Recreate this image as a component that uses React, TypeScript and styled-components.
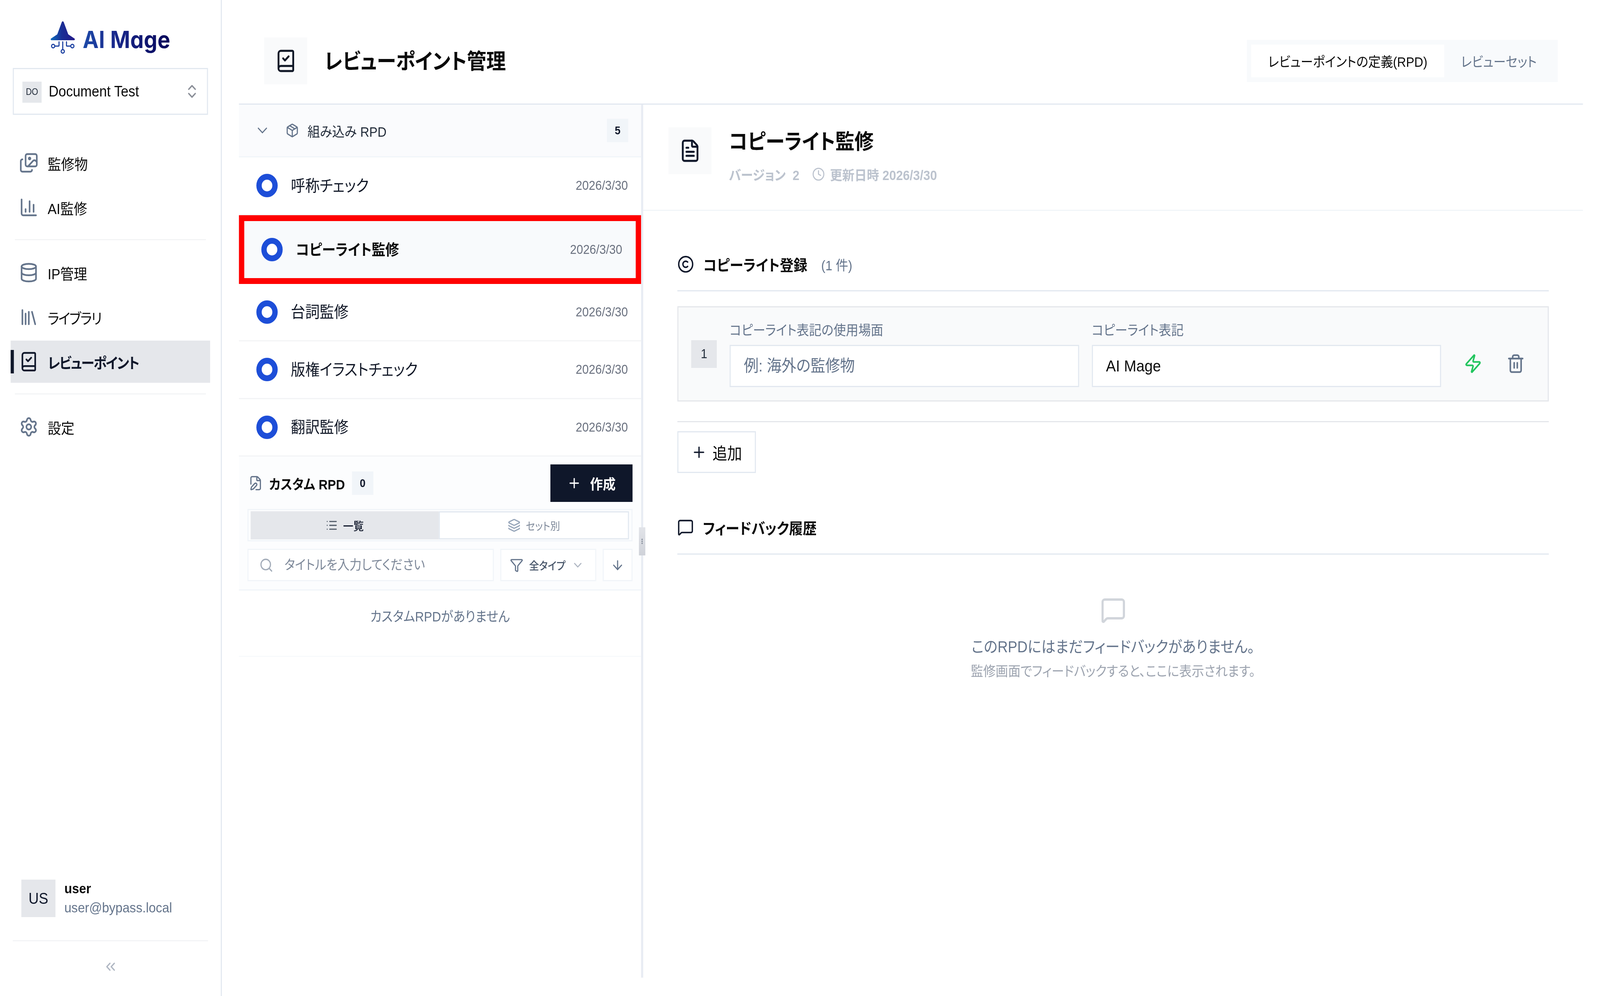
import React from 'react';
import styled, { createGlobalStyle } from 'styled-components';
import {
  ArrowDown,
  BookCheck,
  ChartColumn,
  ChevronDown,
  ChevronsLeft,
  ChevronsUpDown,
  Clock,
  Copyright,
  Database,
  FilePen,
  FileText,
  Filter,
  Images,
  Layers,
  Library,
  List,
  MessageSquare,
  Package,
  Plus,
  Search,
  Settings,
  Trash2,
  Zap,
} from 'lucide-react';

// the layout is drawn on a 4500 wide sheet; the browser window can be narrower
const DESIGN_WIDTH = 4500;
const fitX = Math.min(1, window.innerWidth / DESIGN_WIDTH);

const GlobalStyle = createGlobalStyle`
  html, body {
    margin: 0;
    padding: 0;
    height: 2550px;
    overflow: hidden;
    background: #ffffff;
  }
  body {
    font-family: "Liberation Sans", "Noto Sans CJK JP", sans-serif;
    font-feature-settings: "palt";
    color: #0f172a;
  }
  * {
    box-sizing: border-box;
  }
`;

const Shell = styled.div`
  display: flex;
  width: ${DESIGN_WIDTH}px;
  height: 2550px;
  transform-origin: 0 0;
`;

/* sidebar */

const Sidebar = styled.aside`
  display: flex;
  flex-direction: column;
  flex: 0 0 624px;
  border-right: 3px solid #e2e8f0;
`;

const LogoRow = styled.div`
  display: flex;
  justify-content: center;
  gap: 22px;
  height: 174px;
  padding-top: 54px;
`;

const LogoText = styled.span`
  height: 84px;
  padding-top: 13px;
  font-family: "Inter", sans-serif;
  font-feature-settings: "cv11";
  font-size: 60px;
  line-height: 68px;
  font-weight: 700;
  letter-spacing: 0.5px;
  background: linear-gradient(90deg, #1d4aa8 0%, #1a2a8e 35%, #07075a 100%);
  -webkit-background-clip: text;
  background-clip: text;
  color: transparent;
`;

const ProjectSelect = styled.div`
  display: flex;
  align-items: center;
  height: 120px;
  margin: 0 36px;
  padding: 0 20px 0 24px;
  border: 3px solid #e2e8f0;
`;

const ProjectBadge = styled.span`
  display: flex;
  align-items: center;
  justify-content: center;
  width: 54px;
  height: 54px;
  margin-top: 3px;
  background: #e5e7eb;
  font-size: 23px;
  color: #1f2937;
`;

const ProjectName = styled.span`
  flex: 1;
  margin-left: 20px;
  font-size: 38.2px;
  color: #0a0a0a;
`;

const Nav = styled.nav`
  display: flex;
  flex-direction: column;
  gap: 6px;
  margin: 69px 30px 0;
`;

const NavItem = styled.div<{ $active?: boolean; $kana?: boolean }>`
  position: relative;
  display: flex;
  align-items: center;
  gap: 26px;
  height: 108px;
  padding-left: 24px;
  font-size: 37.7px;
  letter-spacing: ${(p) => (p.$kana ? '-2.3px' : '0')};
  font-weight: ${(p) => (p.$active ? 700 : 400)};
  color: ${(p) => (p.$active ? '#0f172a' : '#0a0a0a')};
  background: ${(p) => (p.$active ? '#e5e7eb' : 'transparent')};

  ${(p) =>
    p.$active &&
    `&::before {
      content: '';
      position: absolute;
      left: 0;
      top: 24px;
      width: 9px;
      height: 60px;
      background: #0f172a;
    }`}
`;

const NavDivider = styled.div`
  height: 3px;
  margin: 21px 12px 23px;
  background: #f3f4f6;
`;

const UserRow = styled.div`
  display: flex;
  align-items: center;
  gap: 25px;
  margin-top: auto;
  padding: 0 0 59px 60px;
`;

const Avatar = styled.span`
  display: flex;
  align-items: center;
  justify-content: center;
  width: 96px;
  height: 96px;
  background: #e5e7eb;
  font-size: 40px;
  color: #0f172a;
`;

const UserText = styled.div`
  display: flex;
  flex-direction: column;
  gap: 6px;
`;

const UserName = styled.span`
  font-size: 35.5px;
  line-height: 42px;
  font-weight: 700;
  color: #0a0a0a;
`;

const UserMail = styled.span`
  font-size: 35.8px;
  line-height: 44px;
  color: #64748b;
`;

const SideFooter = styled.div`
  display: flex;
  align-items: center;
  justify-content: center;
  height: 132px;
  margin: 0 36px 11px;
  border-top: 3px solid #f3f4f6;
`;

/* main */

const Main = styled.main`
  display: flex;
  flex-direction: column;
  flex: 1;
  min-width: 0;
  padding: 0 48px;
`;

const PageHeader = styled.header`
  display: flex;
  align-items: center;
  height: 268px;
  padding: 46px 71px 0;
  border-bottom: 3px solid #e2e8f0;
`;

const IconBox = styled.span`
  display: flex;
  align-items: center;
  justify-content: center;
  flex: 0 0 121px;
  height: 120px;
  background: #f9fafb;
`;

const PageTitle = styled.h1`
  flex: 1;
  margin: 0 0 8px 48px;
  font-size: 55px;
  font-weight: 700;
  color: #0a0a0a;
`;

const HeaderTabs = styled.div`
  display: flex;
  align-items: center;
  height: 108px;
  padding: 0 12px;
  background: #f8fafc;
`;

const HeaderTab = styled.span<{ $active?: boolean }>`
  display: flex;
  align-items: center;
  justify-content: center;
  width: ${(p) => (p.$active ? '543px' : '307px')};
  height: 84px;
  font-size: 34.8px;
  color: ${(p) => (p.$active ? '#0a0a0a' : '#64748b')};
  background: ${(p) => (p.$active ? '#ffffff' : 'transparent')};
`;

const Body = styled.div`
  display: flex;
  height: 2235px;
`;

/* left list panel */

const ListPanel = styled.section`
  position: relative;
  flex: 0 0 1137px;
  border-right: 6px solid #e8ecf3;
`;

const Resizer = styled.span`
  position: absolute;
  top: 1082px;
  right: -12px;
  width: 18px;
  height: 72px;
  background:
    radial-gradient(circle, #7f8795 1.5px, transparent 2px) center / 6px 6px no-repeat,
    radial-gradient(circle, #7f8795 1.5px, transparent 2px) 50% 42% / 6px 6px no-repeat,
    radial-gradient(circle, #7f8795 1.5px, transparent 2px) 50% 58% / 6px 6px no-repeat,
    linear-gradient(180deg, #e2e4e9, #cfd2d9);
`;

const BuiltinHead = styled.div`
  display: flex;
  align-items: center;
  gap: 42px;
  height: 135px;
  padding: 0 36px 0 43px;
  background: #fafbfd;
  border-bottom: 3px solid #f1f5f9;
`;

const BuiltinTitle = styled.span`
  flex: 1;
  margin-left: -18px;
  font-size: 35px;
  color: #1f2937;
`;

const CountBadge = styled.span`
  display: flex;
  align-items: center;
  justify-content: center;
  width: 60px;
  height: 60px;
  background: #f1f5f9;
  font-size: 29px;
  font-weight: 700;
  color: #0f172a;
`;

const Row = styled.div<{ $selected?: boolean }>`
  display: flex;
  align-items: center;
  height: ${(p) => (p.$selected ? '176px' : '147.5px')};
  padding: ${(p) => (p.$selected ? '0 38px 0 48px' : '0 37px 0 49px')};
  background: ${(p) => (p.$selected ? '#f8fafc' : '#ffffff')};
  border: ${(p) => (p.$selected ? '15px solid #ff0000' : 'none')};
  border-bottom: ${(p) =>
    p.$selected ? '15px solid #ff0000' : '3px solid #f3f4f6'};
`;

const Ring = styled.span`
  flex: 0 0 60px;
  height: 60px;
  border: 15px solid #1d4ed8;
  border-radius: 50%;
  background: #ffffff;
`;

const RowTitle = styled.span<{ $selected?: boolean }>`
  flex: 1;
  margin-left: 37px;
  padding-bottom: 6px;
  font-size: ${(p) => (p.$selected ? '38.5px' : '40.5px')};
  font-weight: ${(p) => (p.$selected ? 700 : 400)};
  color: ${(p) => (p.$selected ? '#0a0a0a' : '#111827')};
`;

const RowDate = styled.span`
  font-size: 33px;
  color: #6b7280;
`;

const CustomBlock = styled.div`
  padding: 20px 24px 21px;
  background: #fcfdfe;
  border-bottom: 3px solid #f1f5f9;
`;

const CustomHead = styled.div`
  display: flex;
  align-items: center;
  height: 96px;
  padding-left: 3px;
`;

const CustomTitle = styled.span`
  margin: 0 20px 0 18px;
  font-size: 35px;
  font-weight: 700;
  color: #0a0a0a;
`;

const CreateButton = styled.button`
  display: flex;
  align-items: center;
  justify-content: center;
  gap: 24px;
  width: 231px;
  height: 96px;
  margin-left: auto;
  border: none;
  background: #0f172a;
  color: #ffffff;
  font: inherit;
  font-size: 36px;
  font-weight: 700;
`;

const ViewSwitch = styled.div`
  display: flex;
  height: 83px;
  margin-top: 18px;
  padding: 3px 7px 2px 6px;
  border: 3px solid #f1f5f9;
`;

const ViewTab = styled.span<{ $active?: boolean }>`
  display: flex;
  align-items: center;
  justify-content: center;
  gap: 15px;
  flex: 1;
  font-size: ${(p) => (p.$active ? '29px' : '27.4px')};
  font-weight: ${(p) => (p.$active ? 500 : 400)};
  color: ${(p) => (p.$active ? '#0f172a' : '#7c8798')};
  background: ${(p) => (p.$active ? '#e5e7eb' : '#ffffff')};
  border: ${(p) => (p.$active ? 'none' : '3px solid #e2e8f0')};
`;

const SearchRow = styled.div`
  display: flex;
  gap: 18px;
  height: 83px;
  margin-top: 19px;
`;

const SearchBox = styled.label`
  display: flex;
  align-items: center;
  gap: 29px;
  flex: 1;
  padding-left: 30px;
  border: 3px solid #f1f5f9;
  background: #ffffff;
`;

const SearchInput = styled.input`
  flex: 1;
  min-width: 0;
  border: none;
  outline: none;
  background: transparent;
  font: inherit;
  font-size: 34px;

  &::placeholder {
    color: #7c8798;
    opacity: 1;
  }
`;

const FilterButton = styled.div`
  display: flex;
  align-items: center;
  gap: 16px;
  flex: 0 0 270px;
  padding-left: 24px;
  border: 3px solid #f1f5f9;
  background: #ffffff;
  font-size: 28px;
  font-weight: 500;
  color: #475569;
`;

const SortButton = styled.div`
  display: flex;
  align-items: center;
  justify-content: center;
  flex: 0 0 84px;
  border: 3px solid #f1f5f9;
  background: #ffffff;
`;

const CustomEmpty = styled.div`
  display: flex;
  align-items: center;
  justify-content: center;
  height: 170px;
  padding-bottom: 40px;
  border-bottom: 3px solid #f8fafc;
  font-size: 34.7px;
  color: #64748b;
`;

/* detail panel */

const Detail = styled.section`
  flex: 1;
  min-width: 0;
`;

const DetailHead = styled.div`
  display: flex;
  align-items: flex-start;
  gap: 49px;
  height: 272px;
  padding: 58px 0 0 71px;
  border-bottom: 3px solid #f1f5f9;
`;

const DetailTitle = styled.h2`
  margin: 0;
  font-size: 54px;
  line-height: 74px;
  font-weight: 700;
  color: #0a0a0a;
`;

const MetaRow = styled.div`
  display: flex;
  align-items: center;
  height: 50px;
  margin-top: 21px;
  font-size: 34.5px;
  font-weight: 700;
  color: #bcc3ce;
`;

const MetaVersion = styled.span`
  margin-right: 36px;
`;

const MetaDate = styled.span`
  margin-left: 14px;
`;

const DetailBody = styled.div`
  padding: 0 96px;
`;

const SectionHead = styled.div`
  display: flex;
  align-items: center;
  box-sizing: content-box;
  height: 46px;
  padding-top: 113px;
  padding-bottom: 44px;
  gap: 26px;
  border-bottom: 3px solid #e2e8f0;
`;

const SectionTitle = styled.span`
  font-size: 38.8px;
  font-weight: 700;
  color: #0a0a0a;
`;

const SectionCount = styled.span`
  margin-left: 13px;
  font-size: 35px;
  color: #64748b;
`;

const Card = styled.div`
  display: flex;
  align-items: center;
  gap: 36px;
  height: 244px;
  margin-top: 38px;
  padding: 0 64px 0 36px;
  border: 3px solid #e5e7eb;
  background: #f9fafb;
`;

const IndexBadge = styled.span`
  display: flex;
  align-items: center;
  justify-content: center;
  flex: 0 0 72px;
  height: 71px;
  background: #e5e7eb;
  font-size: 33px;
  color: #1f2937;
`;

const Field = styled.div`
  flex: 1;
  min-width: 0;
`;

const FieldLabel = styled.div`
  height: 50px;
  margin-bottom: 12px;
  font-size: 35px;
  line-height: 50px;
  color: #64748b;
`;

const FieldInput = styled.input`
  display: block;
  width: 100%;
  height: 108px;
  padding: 0 37px;
  border: 3px solid #e2e8f0;
  outline: none;
  background: #ffffff;
  font: inherit;
  font-size: 41.5px;
  color: #0a0a0a;

  &::placeholder {
    color: #64748b;
    opacity: 1;
  }
`;

const CardActions = styled.div`
  display: flex;
  gap: 68px;
  margin: 50px 0 0 28px;
`;

const Rule = styled.div`
  height: 3px;
  margin-top: 50px;
  background: #e5e7eb;
`;

const AddButton = styled.button`
  display: flex;
  align-items: center;
  justify-content: center;
  gap: 16px;
  width: 221px;
  height: 107px;
  margin-top: 23px;
  border: 3px solid #e2e8f0;
  background: #ffffff;
  font: inherit;
  font-size: 41.5px;
  color: #0a0a0a;
`;

const FeedbackHead = styled(SectionHead)`
  padding-top: 116px;
`;

const EmptyFeedback = styled.div`
  display: flex;
  flex-direction: column;
  align-items: center;
  padding-top: 106px;
`;

const EmptyTitle = styled.p`
  margin: 28px 0 0;
  font-size: 40px;
  line-height: 60px;
  color: #64748b;
`;

const EmptyHint = styled.p`
  margin: 8px 0 0;
  font-size: 35px;
  line-height: 50px;
  color: #9ca3af;
`;

const LogoMark = () => (
  <svg width="69" height="84" viewBox="0 0 69 84" fill="none">
    <defs>
      <linearGradient id="logoFill" x1="0" y1="0" x2="1" y2="0">
        <stop offset="0" stopColor="#0f6cbd" />
        <stop offset="0.45" stopColor="#1a2f96" />
        <stop offset="1" stopColor="#241a8a" />
      </linearGradient>
    </defs>
    <path
      d="M32 2 Q34.500 -1 37 2 L50 34 L68 45 Q69.500 49 66 49 L3 49 Q-.5 49 1 45 L19 34 Z"
      fill="url(#logoFill)"
    />
    <g stroke="#1a3fa0" strokeWidth="3" strokeLinecap="round">
      <path d="M34.500 53V72" />
      <path d="M24 53V62.500a1.500 1.500 0 0 1-1.500 1.500H13" />
      <path d="M45 53V62.500a1.500 1.500 0 0 0 1.500 1.500H56" />
      <circle cx="7.500" cy="64" r="4.500" />
      <circle cx="61.500" cy="64" r="4.500" />
      <circle cx="34.500" cy="77.500" r="4.500" />
    </g>
  </svg>
);

const rows = [
  { title: '呼称チェック' },
  { title: 'コピーライト監修', selected: true },
  { title: '台詞監修' },
  { title: '版権イラストチェック' },
  { title: '翻訳監修' },
];

export default function App() {
  return (
    <Shell style={{ transform: `scaleX(${fitX})` }}>
      <GlobalStyle />
      <Sidebar>
        <LogoRow>
          <LogoMark />
          <LogoText>AI Mage</LogoText>
        </LogoRow>
        <ProjectSelect>
          <ProjectBadge>DO</ProjectBadge>
          <ProjectName>Document Test</ProjectName>
          <ChevronsUpDown size={44} color="#8b8f98" strokeWidth={2} />
        </ProjectSelect>
        <Nav>
          <NavItem>
            <Images size={54} color="#64748b" />
            監修物
          </NavItem>
          <NavItem>
            <ChartColumn size={54} color="#64748b" />
            AI監修
          </NavItem>
          <NavDivider />
          <NavItem>
            <Database size={54} color="#64748b" />
            IP管理
          </NavItem>
          <NavItem $kana>
            <Library size={54} color="#64748b" />
            ライブラリ
          </NavItem>
          <NavItem $active $kana>
            <BookCheck size={54} color="#0f172a" />
            レビューポイント
          </NavItem>
          <NavDivider />
          <NavItem>
            <Settings size={54} color="#64748b" />
            設定
          </NavItem>
        </Nav>
        <UserRow>
          <Avatar>US</Avatar>
          <UserText>
            <UserName>user</UserName>
            <UserMail>user@bypass.local</UserMail>
          </UserText>
        </UserRow>
        <SideFooter>
          <ChevronsLeft size={42} color="#b0b7c3" />
        </SideFooter>
      </Sidebar>

      <Main>
        <PageHeader>
          <IconBox>
            <BookCheck size={62} color="#111827" />
          </IconBox>
          <PageTitle>レビューポイント管理</PageTitle>
          <HeaderTabs>
            <HeaderTab $active>レビューポイントの定義(RPD)</HeaderTab>
            <HeaderTab>レビューセット</HeaderTab>
          </HeaderTabs>
        </PageHeader>

        <Body>
          <ListPanel>
            <Resizer />
            <BuiltinHead>
              <ChevronDown size={46} color="#64748b" strokeWidth={1.6} />
              <Package size={38} color="#64748b" />
              <BuiltinTitle>組み込み RPD</BuiltinTitle>
              <CountBadge>5</CountBadge>
            </BuiltinHead>
            {rows.map((row) => (
              <Row key={row.title} $selected={row.selected}>
                <Ring />
                <RowTitle $selected={row.selected}>{row.title}</RowTitle>
                <RowDate>2026/3/30</RowDate>
              </Row>
            ))}
            <CustomBlock>
              <CustomHead>
                <FilePen size={40} color="#64748b" />
                <CustomTitle>カスタム RPD</CustomTitle>
                <CountBadge>0</CountBadge>
                <CreateButton>
                  <Plus size={40} />
                  作成
                </CreateButton>
              </CustomHead>
              <ViewSwitch>
                <ViewTab $active>
                  <List size={34} color="#4b5563" />
                  一覧
                </ViewTab>
                <ViewTab>
                  <Layers size={36} color="#94a3b8" />
                  セット別
                </ViewTab>
              </ViewSwitch>
              <SearchRow>
                <SearchBox>
                  <Search size={40} color="#a3acb9" />
                  <SearchInput placeholder="タイトルを入力してください" />
                </SearchBox>
                <FilterButton>
                  <Filter size={38} color="#64748b" />
                  全タイプ
                  <ChevronDown size={36} color="#b0b7c3" />
                </FilterButton>
                <SortButton>
                  <ArrowDown size={38} color="#64748b" />
                </SortButton>
              </SearchRow>
            </CustomBlock>
            <CustomEmpty>カスタムRPDがありません</CustomEmpty>
          </ListPanel>

          <Detail>
            <DetailHead>
              <IconBox>
                <FileText size={62} color="#0f172a" />
              </IconBox>
              <div>
                <DetailTitle>コピーライト監修</DetailTitle>
                <MetaRow>
                  <MetaVersion>バージョン&nbsp;&nbsp;2</MetaVersion>
                  <Clock size={36} color="#bcc3ce" />
                  <MetaDate>更新日時 2026/3/30</MetaDate>
                </MetaRow>
              </div>
            </DetailHead>
            <DetailBody>
              <SectionHead>
                <Copyright size={47} color="#0f172a" />
                <SectionTitle>コピーライト登録</SectionTitle>
                <SectionCount>(1 件)</SectionCount>
              </SectionHead>
              <Card>
                <IndexBadge>1</IndexBadge>
                <Field>
                  <FieldLabel>コピーライト表記の使用場面</FieldLabel>
                  <FieldInput placeholder="例: 海外の監修物" />
                </Field>
                <Field>
                  <FieldLabel>コピーライト表記</FieldLabel>
                  <FieldInput defaultValue="AI Mage" />
                </Field>
                <CardActions>
                  <Zap size={52} color="#22c55e" />
                  <Trash2 size={52} color="#64748b" />
                </CardActions>
              </Card>
              <Rule />
              <AddButton>
                <Plus size={44} color="#0f172a" />
                追加
              </AddButton>
              <FeedbackHead>
                <MessageSquare size={46} color="#0f172a" />
                <SectionTitle>フィードバック履歴</SectionTitle>
              </FeedbackHead>
              <EmptyFeedback>
                <MessageSquare size={72} color="#d1d5db" />
                <EmptyTitle>このRPDにはまだフィードバックがありません。</EmptyTitle>
                <EmptyHint>監修画面でフィードバックすると、ここに表示されます。</EmptyHint>
              </EmptyFeedback>
            </DetailBody>
          </Detail>
        </Body>
      </Main>
    </Shell>
  );
}
